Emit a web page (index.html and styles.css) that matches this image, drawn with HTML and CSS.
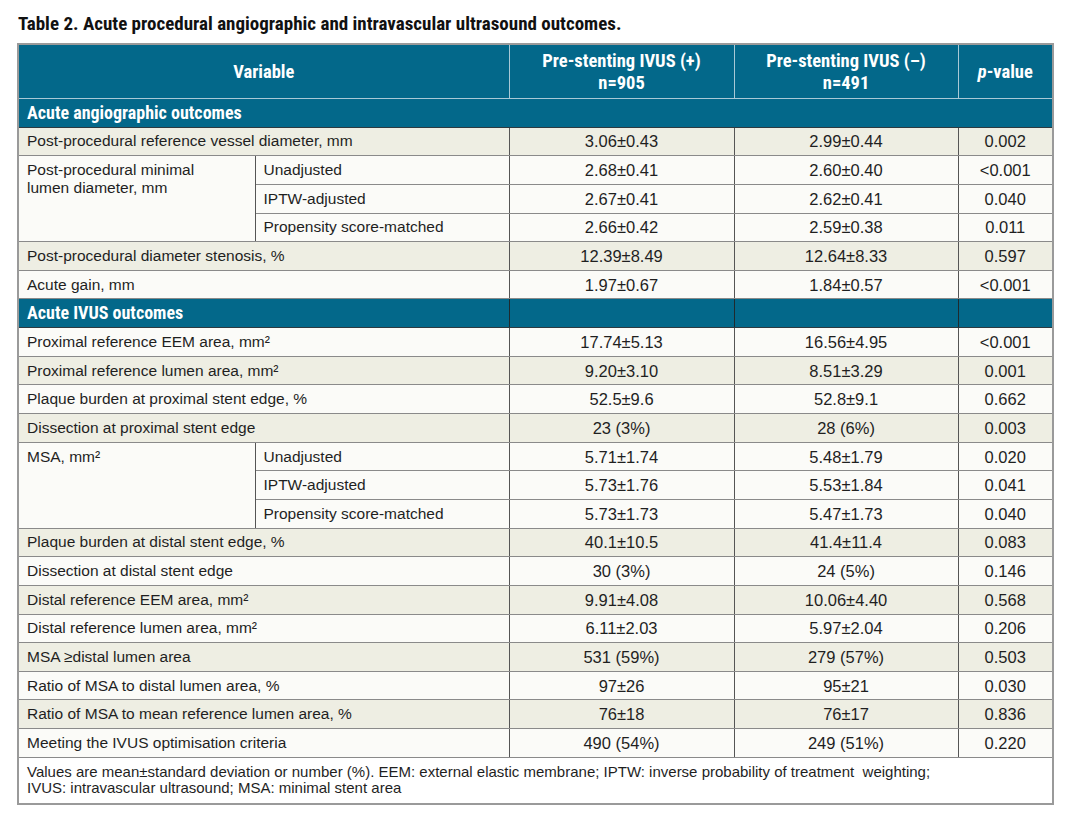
FILE: index.html
```html
<!DOCTYPE html>
<html lang="en">
<head>
<meta charset="utf-8">
<title>Table 2</title>
<link rel="stylesheet" href="styles.css">
</head>
<body>
<div class="page">
  <h1 class="caption">Table 2. Acute procedural angiographic and intravascular ultrasound outcomes.</h1>
  <table class="data">
    <colgroup>
      <col class="c-var1">
      <col class="c-var2">
      <col class="c-g1">
      <col class="c-g2">
      <col class="c-p">
    </colgroup>
    <thead>
      <tr class="head">
        <th colspan="2">Variable</th>
        <th>Pre-stenting IVUS (+)<br>n=905</th>
        <th>Pre-stenting IVUS (–)<br>n=491</th>
        <th><i>p</i>-value</th>
      </tr>
    </thead>
    <tbody>
      <tr class="section first"><td colspan="5">Acute angiographic outcomes</td></tr>
      <tr class="beige"><td colspan="2" class="lbl">Post-procedural reference vessel diameter, mm</td><td>3.06±0.43</td><td>2.99±0.44</td><td>0.002</td></tr>
      <tr class="white"><td rowspan="3" class="lbl top">Post-procedural minimal<br>lumen diameter, mm</td><td class="lbl">Unadjusted</td><td>2.68±0.41</td><td>2.60±0.40</td><td>&lt;0.001</td></tr>
      <tr class="white"><td class="lbl">IPTW-adjusted</td><td>2.67±0.41</td><td>2.62±0.41</td><td>0.040</td></tr>
      <tr class="white"><td class="lbl">Propensity score-matched</td><td>2.66±0.42</td><td>2.59±0.38</td><td>0.011</td></tr>
      <tr class="beige"><td colspan="2" class="lbl">Post-procedural diameter stenosis, %</td><td>12.39±8.49</td><td>12.64±8.33</td><td>0.597</td></tr>
      <tr class="white"><td colspan="2" class="lbl">Acute gain, mm</td><td>1.97±0.67</td><td>1.84±0.57</td><td>&lt;0.001</td></tr>
      <tr class="section second"><td colspan="2">Acute IVUS outcomes</td><td></td><td></td><td></td></tr>
      <tr class="white"><td colspan="2" class="lbl">Proximal reference EEM area, mm²</td><td>17.74±5.13</td><td>16.56±4.95</td><td>&lt;0.001</td></tr>
      <tr class="beige"><td colspan="2" class="lbl">Proximal reference lumen area, mm²</td><td>9.20±3.10</td><td>8.51±3.29</td><td>0.001</td></tr>
      <tr class="white"><td colspan="2" class="lbl">Plaque burden at proximal stent edge, %</td><td>52.5±9.6</td><td>52.8±9.1</td><td>0.662</td></tr>
      <tr class="beige"><td colspan="2" class="lbl">Dissection at proximal stent edge</td><td>23 (3%)</td><td>28 (6%)</td><td>0.003</td></tr>
      <tr class="white"><td rowspan="3" class="lbl top">MSA, mm²</td><td class="lbl">Unadjusted</td><td>5.71±1.74</td><td>5.48±1.79</td><td>0.020</td></tr>
      <tr class="white"><td class="lbl">IPTW-adjusted</td><td>5.73±1.76</td><td>5.53±1.84</td><td>0.041</td></tr>
      <tr class="white"><td class="lbl">Propensity score-matched</td><td>5.73±1.73</td><td>5.47±1.73</td><td>0.040</td></tr>
      <tr class="beige"><td colspan="2" class="lbl">Plaque burden at distal stent edge, %</td><td>40.1±10.5</td><td>41.4±11.4</td><td>0.083</td></tr>
      <tr class="white"><td colspan="2" class="lbl">Dissection at distal stent edge</td><td>30 (3%)</td><td>24 (5%)</td><td>0.146</td></tr>
      <tr class="beige"><td colspan="2" class="lbl">Distal reference EEM area, mm²</td><td>9.91±4.08</td><td>10.06±4.40</td><td>0.568</td></tr>
      <tr class="white"><td colspan="2" class="lbl">Distal reference lumen area, mm²</td><td>6.11±2.03</td><td>5.97±2.04</td><td>0.206</td></tr>
      <tr class="beige"><td colspan="2" class="lbl">MSA ≥distal lumen area</td><td>531 (59%)</td><td>279 (57%)</td><td>0.503</td></tr>
      <tr class="white"><td colspan="2" class="lbl">Ratio of MSA to distal lumen area, %</td><td>97±26</td><td>95±21</td><td>0.030</td></tr>
      <tr class="beige"><td colspan="2" class="lbl">Ratio of MSA to mean reference lumen area, %</td><td>76±18</td><td>76±17</td><td>0.836</td></tr>
      <tr class="white"><td colspan="2" class="lbl">Meeting the IVUS optimisation criteria</td><td>490 (54%)</td><td>249 (51%)</td><td>0.220</td></tr>
    </tbody>
    <tfoot>
      <tr class="note"><td colspan="5">Values are mean±standard deviation or number (%). EEM: external elastic membrane; IPTW: inverse probability of treatment&nbsp; weighting;<br>IVUS: intravascular ultrasound; MSA: minimal stent area</td></tr>
    </tfoot>
  </table>
</div>
</body>
</html>
```

FILE: styles.css
```css
html, body {
  margin: 0;
  padding: 0;
  background: #ffffff;
}

.page {
  padding: 13px 18px 0 17px;
}

.caption {
  margin: 0 0 8px 1px;
  font-family: Roboto, "Liberation Sans", sans-serif;
  font-stretch: 75%;
  font-weight: bold;
  font-size: 19px;
  line-height: 22px;
  color: #111;
}

.data {
  width: 1035px;
  border-collapse: collapse;
  table-layout: fixed;
  border: 2px solid #9a9a9a;
  font-family: "Liberation Sans", "Open Sans", sans-serif;
  font-size: 15.5px;
  color: #1f1f1f;
}

.c-var1 { width: 237px; }
.c-var2 { width: 254px; }
.c-g1 { width: 225px; }
.c-g2 { width: 224px; }
.c-p { width: 95px; }

.data td {
  height: 27.65px;
  padding: 0 8px;
  text-align: center;
  vertical-align: middle;
  border: 1px solid #555;
  border-top-color: #8a8a8a;
  border-bottom-color: #8a8a8a;
  line-height: 18px;
  font-size: 16.5px;
}

.data td.lbl {
  text-align: left;
  font-size: 15.5px;
}

.data td.top {
  vertical-align: top;
  padding-top: 5px;
}

.head th {
  height: 53px;
  background: #03688a;
  color: #ffffff;
  font-family: Roboto, "Liberation Sans", sans-serif;
  font-stretch: 75%;
  font-weight: bold;
  font-size: 18.5px;
  line-height: 22px;
  border: 1px solid #a9c9d6;
  border-top: none;
  padding: 0 6px;
}

.head th:first-child { border-left: none; }
.head th:last-child { border-right: none; }

.section td {
  background: #03688a;
  color: #ffffff;
  font-family: Roboto, "Liberation Sans", sans-serif;
  font-stretch: 75%;
  font-weight: bold;
  font-size: 18px;
  text-align: left;
  padding-left: 8px;
  border-color: #2d3a40;
}

.section.first td {
  border-top: 1px solid #a9c9d6;
  border-left: none;
  border-right: none;
}

.section.second td {
  border-left-color: #1f2a2e;
  border-right-color: #1f2a2e;
}

.section.second td:first-child { border-left: none; }
.section.second td:last-child { border-right: none; }

.beige td { background: #eeeee3; }
.white td { background: #fbfbf8; }

.data tbody td:first-child { border-left: none; }
.data tbody td:last-child { border-right: none; }

.note td {
  height: auto;
  background: #ffffff;
  text-align: left;
  font-size: 15px;
  line-height: 16.5px;
  padding: 6px 8px 6px 8px;
  border-top: 1px solid #8a8a8a;
}
```
